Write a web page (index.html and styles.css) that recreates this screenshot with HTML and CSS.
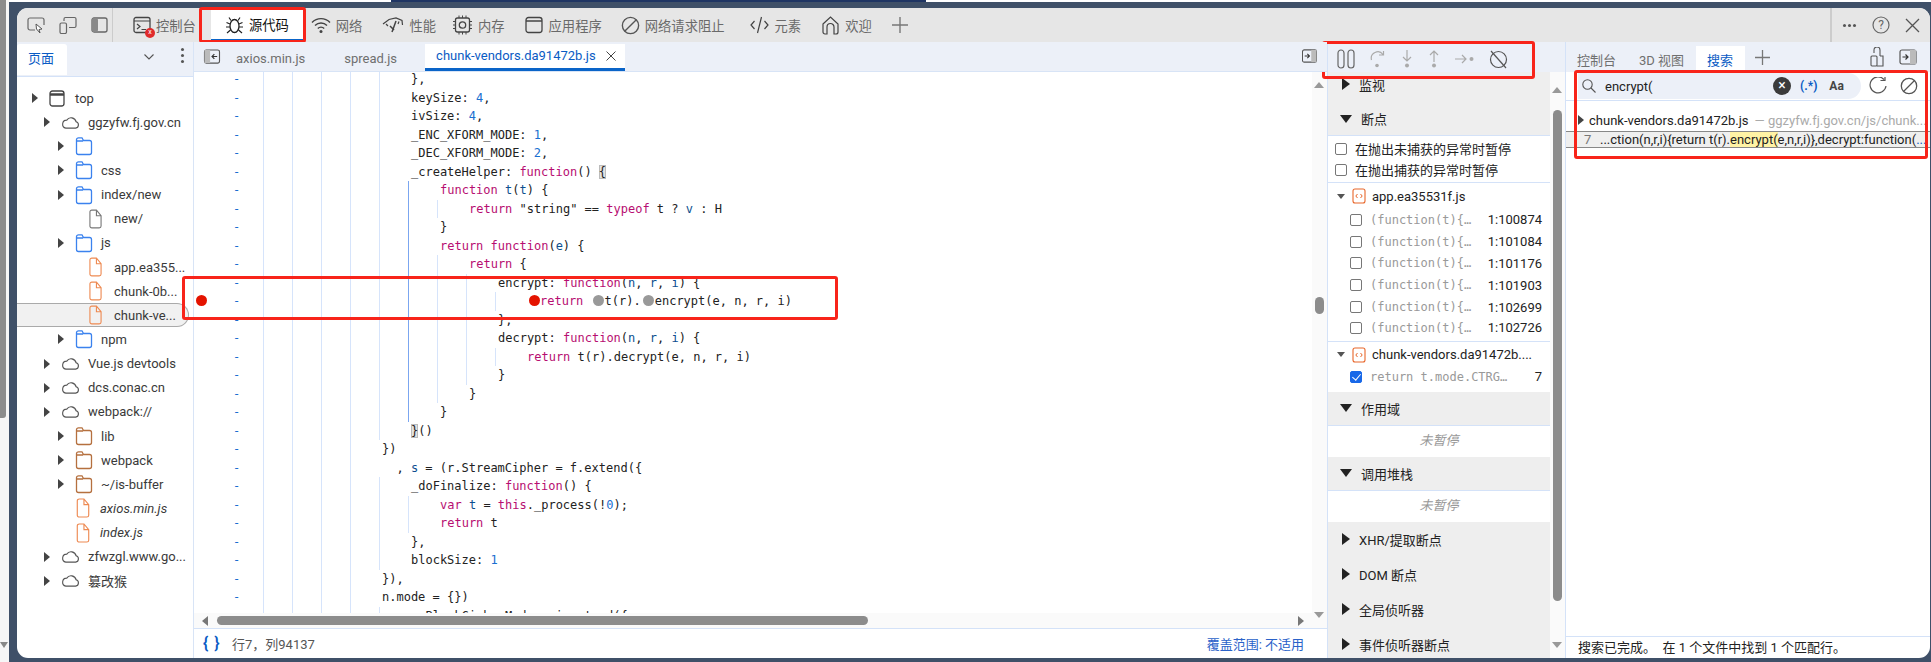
FILE: index.html
```html
<!DOCTYPE html>
<html lang="zh">
<head>
<meta charset="utf-8">
<title>DevTools</title>
<link rel="stylesheet" href="styles.css">
</head>
<body>
<svg class="defs" width="0" height="0">
  <symbol id="folder" viewBox="0 0 18 20"><path d="M1.5 5V16.5A2 2 0 0 0 3.5 18.5H14.500A2 2 0 0 0 16.500 16.500V6.500A2 2 0 0 0 14.500 4.500H8.500L7 1.800H3.500A2 2 0 0 0 1.500 3.800V5H8" fill="none" stroke="currentColor" stroke-width="1.300"/></symbol>
  <symbol id="file" viewBox="0 0 14 21"><path d="M1 3A2 2 0 0 1 3 1H8L13 7V18A2 2 0 0 1 11 20H3A2 2 0 0 1 1 18ZM8 1V7H13" fill="none" stroke="currentColor" stroke-width="1.200"/></symbol>
  <symbol id="cloud" viewBox="0 0 20 16"><path d="M5 14H15.500A3.500 3.500 0 0 0 16 7.200A5.500 5.500 0 0 0 6 5.500A4.300 4.300 0 0 0 5 14Z" fill="none" stroke="#555" stroke-width="1.200"/></symbol>
  <symbol id="ban" viewBox="0 0 18 18"><circle cx="9" cy="9" r="7.700" fill="none" stroke="currentColor" stroke-width="1.300"/><path d="M3.500 14.500L14.500 3.500" stroke="currentColor" stroke-width="1.300"/></symbol>
  <symbol id="jsfile" viewBox="0 0 14 16"><rect x="1" y="1" width="12" height="14" rx="2" fill="none" stroke="#e8662a" stroke-width="1.100"/><path d="M5.500 6L3.800 8L5.500 10M8.500 6L10.200 8L8.500 10" fill="none" stroke="#e8662a"/></symbol>
  <symbol id="dock" viewBox="0 0 18 16"><rect x="1" y="1" width="16" height="14" rx="2" fill="none" stroke="#555" stroke-width="1.200"/><rect x="11" y="1" width="6" height="14" fill="#bbb"/><path d="M3.500 8H9M6.500 5.500L9 8L6.500 10.500" fill="none" stroke="#333" stroke-width="1.200"/></symbol>
</svg>
<div class="app">
  <div class="rail"><span class="rail-thumb"></span><span class="rail-arrow"></span></div>
  <div class="frame">
    <div class="strip"><span class="seg-a"></span><span class="seg-b"></span><span class="seg-c"></span></div>
    <div class="window">
      <header class="topbar">
        <div class="tools">
          <svg width="18" height="18" viewBox="0 0 18 18"><path d="M8 14H3A2 2 0 0 1 1 12V4A2 2 0 0 1 3 2H15A2 2 0 0 1 17 4V9" fill="none" stroke="#666" stroke-width="1.200"/><path d="M9 8L15 13L12 13.500L13 17L9.500 13Z" fill="#fff" stroke="#555"/></svg>
          <svg width="18" height="18" viewBox="0 0 18 18"><rect x="1" y="7" width="6.500" height="10.500" rx="1.500" fill="none" stroke="#666" stroke-width="1.200"/><path d="M5 5V3A1.500 1.500 0 0 1 6.500 1.500H15.500A1.500 1.500 0 0 1 17 3V10A1.500 1.500 0 0 1 15.500 11.500H10" fill="none" stroke="#666" stroke-width="1.200"/></svg>
          <svg width="17" height="18" viewBox="0 0 17 18"><rect x="1" y="2" width="15" height="14" rx="2" fill="none" stroke="#666" stroke-width="1.300"/><rect x="1" y="2" width="6" height="14" rx="2" fill="#888"/></svg>
        </div>
        <nav class="tabs">
          <div class="tab">
            <span class="badged"><svg width="18" height="18" viewBox="0 0 18 18"><rect x="1" y="1.500" width="16" height="15" rx="2" fill="none" stroke="#444" stroke-width="1.300"/><path d="M1 5H17M4 8L7 10.500L4 13M8.500 13.500H13" fill="none" stroke="#444" stroke-width="1.200"/></svg><span class="badge">x</span></span>
            控制台
          </div>
          <div class="tab active">
            <svg width="19" height="18" viewBox="0 0 19 18"><ellipse cx="9.500" cy="10" rx="4.500" ry="6.500" fill="none" stroke="#222" stroke-width="1.300"/><path d="M6 4.500L4 1.500M13 4.500L15 1.500M5 8L1.500 6.500M14 8L17.500 6.500M5 11H1M14 11H18M5.500 14L2 17M13.500 14L17 17" fill="none" stroke="#222" stroke-width="1.200"/></svg>
            源代码
          </div>
          <div class="tab tab-net">
            <svg width="20" height="18" viewBox="0 0 20 18"><path d="M1 6.500A12.500 12.500 0 0 1 19 6.500M4 9.500A8.500 8.500 0 0 1 16 9.500M6.800 12.500A4.500 4.500 0 0 1 13.200 12.500" fill="none" stroke="#444" stroke-width="1.400"/><circle cx="10" cy="15.500" r="1.500" fill="#444"/></svg>
            网络
          </div>
          <div class="tab">
            <svg width="22" height="18" viewBox="0 0 22 18"><path d="M1 8L7 3.500L14 2L20 4.500L20.500 9M4 8L6 10M17 5.500L16 8" fill="none" stroke="#444" stroke-width="1.200"/><path d="M14 5L10 16M8 10L12 14" fill="none" stroke="#444" stroke-width="1.500"/></svg>
            性能
          </div>
          <div class="tab tab-mem">
            <svg width="21" height="20" viewBox="0 0 21 20"><rect x="3.500" y="3" width="14" height="14" rx="2" fill="none" stroke="#444" stroke-width="1.300"/><circle cx="10.500" cy="10" r="3.200" fill="none" stroke="#444" stroke-width="1.300"/><path d="M7 0.500V3M10.500 0.500V3M14 0.500V3M7 17V19.500M10.500 17V19.500M14 17V19.500M1 6.500H3.500M1 10H3.500M1 13.500H3.500M17.500 6.500H20M17.500 10H20M17.500 13.500H20" stroke="#444"/></svg>
            内存
          </div>
          <div class="tab tab-app">
            <svg width="18" height="18" viewBox="0 0 18 18"><rect x="1" y="1.500" width="16" height="15" rx="2.500" fill="none" stroke="#444" stroke-width="1.300"/><path d="M1 5H17" stroke="#444" stroke-width="1.300"/></svg>
            应用程序
          </div>
          <div class="tab">
            <svg class="ink" width="19" height="19"><use href="#ban"/></svg>
            网络请求阻止
          </div>
          <div class="tab tab-el">
            <svg width="19" height="18" viewBox="0 0 19 18"><path d="M4.500 5L1 9L4.500 13M14.500 5L18 9L14.500 13M11.500 1L7.500 17" fill="none" stroke="#444" stroke-width="1.200"/></svg>
            元素
          </div>
          <div class="tab tab-home">
            <svg width="17" height="19" viewBox="0 0 17 19"><path d="M1 8L8.500 1L16 8V16A2 2 0 0 1 14 18H12V11A3.500 3.500 0 0 0 5 11V18H3A2 2 0 0 1 1 16Z" fill="none" stroke="#444" stroke-width="1.200"/></svg>
            欢迎
          </div>
          <svg class="plus" width="16" height="16" viewBox="0 0 16 16"><path d="M8 0V16M0 8H16" stroke="#777" stroke-width="1.400"/></svg>
        </nav>
        <div class="winctl">
          <span class="dots"><i></i><i></i><i></i></span>
          <svg width="18" height="18" viewBox="0 0 18 18"><circle cx="9" cy="9" r="8" fill="none" stroke="#666" stroke-width="1.200"/><text x="9" y="13" class="q">?</text></svg>
          <svg width="15" height="15" viewBox="0 0 15 15"><path d="M1 1L14 14M14 1L1 14" stroke="#555" stroke-width="1.300"/></svg>
        </div>
      </header>

      <div class="panes">
        <aside class="nav">
          <div class="nav-head">
            <span class="nav-tab">页面</span>
            <svg class="chev" width="10" height="6" viewBox="0 0 10 6"><path d="M0.500 0.500L5 5L9.500 0.500" fill="none" stroke="#555" stroke-width="1.100"/></svg>
            <span class="kebab"><i></i><i></i><i></i></span>
          </div>
          <ul class="tree">
            <li class="node l0"><span class="tri"></span><svg class="i-top" width="16" height="17" viewBox="0 0 16 17"><rect x="1" y="1" width="14" height="15" rx="2.500" fill="none" stroke="#444" stroke-width="1.300"/><path d="M1 4.500H15" stroke="#444" stroke-width="2.500"/></svg>top</li>
            <li class="node l1"><span class="tri"></span><svg class="i-cloud" width="19" height="15"><use href="#cloud"/></svg>ggzyfw.fj.gov.cn</li>
            <li class="node l2"><span class="tri"></span><svg class="i-folder blue" width="18" height="20"><use href="#folder"/></svg></li>
            <li class="node l2"><span class="tri"></span><svg class="i-folder blue" width="18" height="20"><use href="#folder"/></svg>css</li>
            <li class="node l2"><span class="tri"></span><svg class="i-folder blue" width="18" height="20"><use href="#folder"/></svg>index/new</li>
            <li class="node l3"><svg class="i-file gray" width="13" height="20"><use href="#file"/></svg>new/</li>
            <li class="node l2"><span class="tri"></span><svg class="i-folder blue" width="18" height="20"><use href="#folder"/></svg>js</li>
            <li class="node l3"><svg class="i-file orange" width="13" height="20"><use href="#file"/></svg>app.ea355...</li>
            <li class="node l3"><svg class="i-file orange" width="13" height="20"><use href="#file"/></svg>chunk-0b...</li>
            <li class="node l3 sel"><svg class="i-file orange" width="13" height="20"><use href="#file"/></svg>chunk-ve...</li>
            <li class="node l2"><span class="tri"></span><svg class="i-folder blue" width="18" height="20"><use href="#folder"/></svg>npm</li>
            <li class="node l1"><span class="tri"></span><svg class="i-cloud" width="19" height="15"><use href="#cloud"/></svg>Vue.js devtools</li>
            <li class="node l1"><span class="tri"></span><svg class="i-cloud" width="19" height="15"><use href="#cloud"/></svg>dcs.conac.cn</li>
            <li class="node l1"><span class="tri"></span><svg class="i-cloud" width="19" height="15"><use href="#cloud"/></svg>webpack://</li>
            <li class="node l2"><span class="tri"></span><svg class="i-folder brown" width="18" height="20"><use href="#folder"/></svg>lib</li>
            <li class="node l2"><span class="tri"></span><svg class="i-folder brown" width="18" height="20"><use href="#folder"/></svg>webpack</li>
            <li class="node l2"><span class="tri"></span><svg class="i-folder brown" width="18" height="20"><use href="#folder"/></svg>~/is-buffer</li>
            <li class="node l4"><svg class="i-file orange" width="14" height="20"><use href="#file"/></svg>axios.min.js</li>
            <li class="node l4"><svg class="i-file orange" width="14" height="20"><use href="#file"/></svg>index.js</li>
            <li class="node l1"><span class="tri"></span><svg class="i-cloud" width="19" height="15"><use href="#cloud"/></svg>zfwzgl.www.go...</li>
            <li class="node l1"><span class="tri"></span><svg class="i-cloud" width="19" height="15"><use href="#cloud"/></svg>篡改猴</li>
          </ul>
        </aside>

        <main class="center">
          <div class="file-tabs">
            <svg class="side-toggle" width="18" height="15"><use href="#dock"/></svg>
            <span class="ftab">axios.min.js</span>
            <span class="ftab">spread.js</span>
            <span class="ftab current">chunk-vendors.da91472b.js<svg width="10" height="10" viewBox="0 0 10 10"><path d="M0.500 0.500L9.500 9.500M9.500 0.500L0.500 9.500" stroke="#444" stroke-width="1"/></svg></span>
            <svg class="side-toggle right" width="19" height="14"><use href="#dock"/></svg>
          </div>
          <div class="editor-body">
            <div class="editor-col">
              <div class="code">
                <div class="ln"><span class="num">-</span><span class="ig i5"></span><span class="tx">},</span></div>
                <div class="ln"><span class="num">-</span><span class="ig i5"></span><span class="tx">keySize: <b class="n">4</b>,</span></div>
                <div class="ln"><span class="num">-</span><span class="ig i5"></span><span class="tx">ivSize: <b class="n">4</b>,</span></div>
                <div class="ln"><span class="num">-</span><span class="ig i5"></span><span class="tx">_ENC_XFORM_MODE: <b class="n">1</b>,</span></div>
                <div class="ln"><span class="num">-</span><span class="ig i5"></span><span class="tx">_DEC_XFORM_MODE: <b class="n">2</b>,</span></div>
                <div class="ln"><span class="num">-</span><span class="ig i5"></span><span class="tx">_createHelper: <b class="k">function</b>() <b class="br">{</b></span></div>
                <div class="ln act"><span class="num">-</span><span class="ig i6"></span><span class="tx"><b class="k">function</b> <b class="v">t</b>(<b class="v">t</b>) {</span></div>
                <div class="ln act"><span class="num">-</span><span class="ig i7"></span><span class="tx"><b class="k">return</b> "string" == <b class="k">typeof</b> t ? <b class="v">v</b> : H</span></div>
                <div class="ln act"><span class="num">-</span><span class="ig i6"></span><span class="tx">}</span></div>
                <div class="ln act"><span class="num">-</span><span class="ig i6"></span><span class="tx"><b class="k">return</b> <b class="k">function</b>(<b class="v">e</b>) {</span></div>
                <div class="ln act"><span class="num">-</span><span class="ig i7"></span><span class="tx"><b class="k">return</b> {</span></div>
                <div class="ln act"><span class="num">-</span><span class="ig i8"></span><span class="tx">encrypt: <b class="k">function</b>(<b class="v">n</b>, <b class="v">r</b>, <b class="v">i</b>) {</span></div>
                <div class="ln act"><span class="num">-</span><span class="bp"></span><span class="ig i9"></span><span class="tx"><i class="dot red"></i><b class="k">return</b> <i class="dot"></i>t(r).<i class="dot"></i>encrypt(e, n, r, i)</span></div>
                <div class="ln act"><span class="num">-</span><span class="ig i8"></span><span class="tx">},</span></div>
                <div class="ln act"><span class="num">-</span><span class="ig i8"></span><span class="tx">decrypt: <b class="k">function</b>(<b class="v">n</b>, <b class="v">r</b>, <b class="v">i</b>) {</span></div>
                <div class="ln act"><span class="num">-</span><span class="ig i9"></span><span class="tx"><b class="k">return</b> t(r).decrypt(e, n, r, i)</span></div>
                <div class="ln act"><span class="num">-</span><span class="ig i8"></span><span class="tx">}</span></div>
                <div class="ln act"><span class="num">-</span><span class="ig i7"></span><span class="tx">}</span></div>
                <div class="ln act"><span class="num">-</span><span class="ig i6"></span><span class="tx">}</span></div>
                <div class="ln"><span class="num">-</span><span class="ig i5"></span><span class="tx"><b class="br">}</b>()</span></div>
                <div class="ln"><span class="num">-</span><span class="ig i4"></span><span class="tx">})</span></div>
                <div class="ln"><span class="num">-</span><span class="ig i4"></span><span class="tx">  , <b class="v">s</b> = (r.StreamCipher = f.extend({</span></div>
                <div class="ln"><span class="num">-</span><span class="ig i5"></span><span class="tx">_doFinalize: <b class="k">function</b>() {</span></div>
                <div class="ln"><span class="num">-</span><span class="ig i6"></span><span class="tx"><b class="k">var</b> <b class="v">t</b> = <b class="k">this</b>._process(!<b class="n">0</b>);</span></div>
                <div class="ln"><span class="num">-</span><span class="ig i6"></span><span class="tx"><b class="k">return</b> t</span></div>
                <div class="ln"><span class="num">-</span><span class="ig i5"></span><span class="tx">},</span></div>
                <div class="ln"><span class="num">-</span><span class="ig i5"></span><span class="tx">blockSize: <b class="n">1</b></span></div>
                <div class="ln"><span class="num">-</span><span class="ig i4"></span><span class="tx">}),</span></div>
                <div class="ln"><span class="num">-</span><span class="ig i4"></span><span class="tx">n.mode = {})</span></div>
                <div class="ln"><span class="num">-</span><span class="ig i5"></span><span class="tx">n.BlockCipherMode = i.extend({</span></div>
              </div>
              <div class="hscroll">
                <span class="arrow-l"></span>
                <span class="hthumb"></span>
                <span class="arrow-r"></span>
              </div>
            </div>
            <div class="vscroll">
              <span class="arrow-u"></span>
              <span class="vthumb"></span>
              <span class="arrow-d"></span>
            </div>
          </div>
          <footer class="status">
            <span class="braces">{ }</span>
            <span class="pos">行7，列94137</span>
            <span class="cover">覆盖范围: 不适用</span>
          </footer>
        </main>

        <section class="debug">
          <div class="dbg-tools">
            <svg width="18" height="20" viewBox="0 0 18 20"><rect x="1" y="1" width="6" height="18" rx="3" fill="none" stroke="#666" stroke-width="1.200"/><rect x="11" y="1" width="6" height="18" rx="3" fill="none" stroke="#666" stroke-width="1.200"/></svg>
            <svg width="16" height="18" viewBox="0 0 16 18"><path d="M1.500 10A6.500 6.500 0 0 1 13 4.500M9 5H13.500V1" fill="none" stroke="#aaa" stroke-width="1.200"/><circle cx="7" cy="15.500" r="1.800" fill="#aaa"/></svg>
            <svg width="12" height="18" viewBox="0 0 12 18"><path d="M6 0V10M2 7L6 11L10 7" fill="none" stroke="#aaa" stroke-width="1.200"/><circle cx="6" cy="15.500" r="2" fill="#aaa"/></svg>
            <svg width="12" height="18" viewBox="0 0 12 18"><path d="M6 12V1M2 5L6 1L10 5" fill="none" stroke="#aaa" stroke-width="1.200"/><circle cx="6" cy="15.500" r="2" fill="#aaa"/></svg>
            <svg width="19" height="12" viewBox="0 0 19 12"><path d="M0 6H11M7 2L11 6L7 10" fill="none" stroke="#aaa" stroke-width="1.200"/><circle cx="16.500" cy="6" r="2" fill="#aaa"/></svg>
            <svg class="ink" width="19" height="19" viewBox="0 0 19 19"><circle cx="9.500" cy="9.500" r="8" fill="none" stroke="#555" stroke-width="1.200"/><path d="M2 1L17 18" stroke="#555" stroke-width="1.200"/></svg>
          </div>
          <div class="dbg-scroll">
            <div class="dbg-list">
              <div class="sec first"><span class="tri big"></span>监视</div>
              <div class="sec line"><span class="tri down"></span>断点</div>
              <div class="checks">
                <label class="chk"><i class="box"></i>在抛出未捕获的异常时暂停</label>
                <label class="chk"><i class="box"></i>在抛出捕获的异常时暂停</label>
              </div>
              <div class="bp-file"><span class="tri small"></span><svg width="14" height="16"><use href="#jsfile"/></svg>app.ea35531f.js</div>
              <div class="bp-row"><i class="box"></i><span class="snip">(function(t){…</span><span class="loc">1:100874</span></div>
              <div class="bp-row"><i class="box"></i><span class="snip">(function(t){…</span><span class="loc">1:101084</span></div>
              <div class="bp-row"><i class="box"></i><span class="snip">(function(t){…</span><span class="loc">1:101176</span></div>
              <div class="bp-row"><i class="box"></i><span class="snip">(function(t){…</span><span class="loc">1:101903</span></div>
              <div class="bp-row"><i class="box"></i><span class="snip">(function(t){…</span><span class="loc">1:102699</span></div>
              <div class="bp-row last"><i class="box"></i><span class="snip">(function(t){…</span><span class="loc">1:102726</span></div>
              <div class="bp-file"><span class="tri small"></span><svg width="14" height="16"><use href="#jsfile"/></svg>chunk-vendors.da91472b....</div>
              <div class="bp-row single"><i class="box on"></i><span class="snip">return t.mode.CTRG…</span><span class="loc">7</span></div>
              <div class="sec line"><span class="tri down"></span>作用域</div>
              <div class="idle">未暂停</div>
              <div class="sec line"><span class="tri down"></span>调用堆栈</div>
              <div class="idle">未暂停</div>
              <div class="sec tall"><span class="tri big"></span>XHR/提取断点</div>
              <div class="sec tall"><span class="tri big"></span>DOM 断点</div>
              <div class="sec tall"><span class="tri big"></span>全局侦听器</div>
              <div class="sec tall"><span class="tri big"></span>事件侦听器断点</div>
            </div>
            <div class="dbg-bar">
              <span class="arrow-u"></span>
              <span class="dthumb"></span>
              <span class="arrow-d"></span>
            </div>
          </div>
        </section>

        <aside class="drawer">
          <div class="drawer-tabs">
            <span class="dtab">控制台</span>
            <span class="dtab">3D 视图</span>
            <span class="dtab on">搜索</span>
            <svg class="plus" width="15" height="15" viewBox="0 0 15 15"><path d="M7.500 0V15M0 7.500H15" stroke="#777" stroke-width="1.300"/></svg>
            <span class="spring"></span>
            <svg width="14" height="20" viewBox="0 0 14 20"><path d="M4 6V3A3 3 0 0 1 10 3V9" fill="none" stroke="#555" stroke-width="1.100"/><rect x="1" y="9" width="6" height="10" rx="1" fill="none" stroke="#555" stroke-width="1.100"/><path d="M10 9H13V19H7" fill="none" stroke="#555" stroke-width="1.100"/></svg>
            <svg width="18" height="16"><use href="#dock"/></svg>
          </div>
          <div class="search-row">
            <div class="pill">
              <svg width="14" height="14" viewBox="0 0 14 14"><circle cx="5.500" cy="5.500" r="4.700" fill="none" stroke="#555" stroke-width="1.100"/><path d="M9 9L13.500 13.500" stroke="#555" stroke-width="1.100"/></svg>
              <span class="query">encrypt(</span>
              <span class="clear">×</span>
              <span class="regex">(.*)</span>
              <span class="case">Aa</span>
            </div>
            <svg class="refresh" width="18" height="18" viewBox="0 0 18 18"><path d="M15 2.500A8 8 0 1 0 17 9M11.500 3.500H16V0" fill="none" stroke="#555" stroke-width="1.200"/></svg>
            <svg class="ink" width="18" height="18"><use href="#ban"/></svg>
          </div>
          <div class="results">
            <div class="res-file"><span class="tri"></span><span class="res-name">chunk-vendors.da91472b.js</span><span class="res-path">— ggzyfw.fj.gov.cn/js/chunk...</span></div>
            <div class="res-line"><span class="res-no">7</span><span class="res-txt">...ction(n,r,i){return t(r).<mark class="hit">encrypt(</mark>e,n,r,i)},decrypt:function(<em class="more">...</em></span></div>
          </div>
          <div class="drawer-status">搜索已完成。&nbsp; 在 1 个文件中找到 1 个匹配行。</div>
        </aside>
      </div>
    </div>
  </div>
  <span class="mark m-tab"></span>
  <span class="mark m-line"></span>
  <span class="mark m-tools"></span>
  <span class="mark m-search"></span>
</div>
</body>
</html>
```
FILE: styles.css
```css
* { box-sizing: border-box; }
html, body { margin: 0; padding: 0; }
body { width: 1931px; height: 662px; overflow: hidden; font-family: Roboto, "Noto Sans CJK SC", sans-serif; font-size: 13px; color: #333; }
.defs { position: absolute; }
svg { flex: none; display: block; }
.ink { color: #555; }

.app { position: relative; display: flex; width: 1931px; height: 662px; background: #3f5068; }
.rail { position: relative; width: 9px; background: #f6f6f6; }
.rail-thumb { display: block; width: 6px; height: 418px; background: #8c8c8c; border-radius: 0 0 3px 0; }
.rail-arrow { position: absolute; left: 0; top: 642px; border-left: 4px solid transparent; border-right: 4px solid transparent; border-top: 6px solid #888; }
.frame { flex: 1; display: flex; flex-direction: column; min-width: 0; padding-right: 1px; }
.strip { display: flex; height: 2px; margin-bottom: 6px; margin-right: -1px; }
.seg-a { width: 382px; background: #fff; }
.seg-b { width: 535px; background: #1f3563; }
.seg-c { flex: 1; background: #fff; }
.window { flex: 1; display: flex; flex-direction: column; margin: 0 0 4px 8px; background: #fff; border-radius: 11px; overflow: hidden; min-height: 0; }

/* top bar */
.topbar { display: flex; align-items: center; height: 34px; background: #e6e6e6; flex: none; }
.tools { display: flex; align-items: center; gap: 14px; width: 96px; height: 100%; padding-left: 10px; border-right: 1px solid #ccc; }
.tabs { display: flex; align-items: center; height: 100%; flex: 1; padding-left: 10px; }
.tab { display: flex; align-items: center; gap: 5px; height: 100%; padding: 0 10px; color: #6a6a6a; white-space: nowrap; font-size: 13.3px; }
.tab:first-child { margin-right: 5px; }
.tab.active { height: 32px; align-self: flex-end; padding: 0 14px; background: #fff; color: #111; border-bottom: 3px solid #0a64c8; }
.tab-net { margin-left: -2px; }
.tab-mem { margin-left: -4px; }
.tab-app { margin-right: -1px; gap: 6px; }
.tab-el { margin-left: 5px; gap: 6px; }
.tab-home { margin-left: 1px; gap: 6px; }
.badged { position: relative; display: block; }
.badge { position: absolute; right: -4px; bottom: -4px; width: 10px; height: 10px; border-radius: 50%; background: #e02b2b; color: #fff; font-size: 7px; line-height: 9px; text-align: center; }
.plus { margin-left: 10px; }
.winctl { display: flex; align-items: center; gap: 15px; height: 100%; width: 100px; padding-left: 11px; border-left: 2px solid #ccc; }
.dots { display: flex; gap: 2px; width: 14px; }
.dots i { width: 3px; height: 3px; border-radius: 50%; background: #555; }
.q { font-size: 12px; fill: #666; text-anchor: middle; }

/* panes */
.panes { flex: 1; display: flex; min-height: 0; }
.nav { width: 177px; flex: none; border-right: 1px solid #d8e4f6; display: flex; flex-direction: column; }
.nav-head { position: relative; display: flex; align-items: flex-start; height: 35px; background: #ecf0f8; border-bottom: 1px solid #d4e2f8; }
.nav-tab { width: 50px; height: 31px; margin-top: 2px; background: #fff; color: #0a5bc4; line-height: 30px; padding-left: 11px; border-radius: 3px 3px 0 0; }
.chev { margin: 12px 0 0 77px; }
.kebab { display: flex; flex-direction: column; gap: 3px; margin: 6px 0 0 27px; }
.kebab i { width: 3px; height: 3px; border-radius: 50%; background: #555; }
.tree { list-style: none; margin: 9px 0 0; padding: 0; }
.node { display: flex; align-items: center; height: 24.15px; white-space: nowrap; color: #3a3a3a; position: relative; }
.tri { width: 0; height: 0; border-left: 6px solid #444; border-top: 5px solid transparent; border-bottom: 5px solid transparent; flex: none; }
.l0 { padding-left: 15px; }
.l1 { padding-left: 27px; }
.l2 { padding-left: 41px; }
.l3 { padding-left: 72px; }
.l4 { padding-left: 59px; font-style: italic; }
.l0 .tri, .l1 .tri, .l2 .tri { margin-right: 11px; }
.i-top { margin-right: 10px; }
.i-cloud { margin-right: 8px; }
.i-folder { margin-right: 8px; }
.i-file { margin-right: 12px; }
.l4 .i-file { margin-right: 10px; }
.blue { color: #3b82ee; }
.brown { color: #b5703f; }
.orange { color: #ee8a52; }
.gray { color: #777; }
.sel { width: 172px; background: #f1f1f1; border: 1px solid #aaa; border-left: 0; border-radius: 0 12px 12px 0; }

/* editor */
.center { width: 1133px; flex: none; display: flex; flex-direction: column; }
.file-tabs { position: relative; z-index: 1; display: flex; align-items: flex-end; height: 30px; background: #ecf0f8; border-bottom: 1px solid #d8e4f6; flex: none; }
.side-toggle { margin: 0 0 7px 9px; transform: scaleX(-1); }
.side-toggle.right { margin: 0 8px 8px auto; transform: none; }
.ftab { height: 27px; line-height: 30px; color: #6f6f6f; white-space: nowrap; }
.ftab:nth-of-type(1) { margin-left: 15px; }
.ftab:nth-of-type(2) { margin-left: 39px; }
.current { display: flex; align-items: center; gap: 10px; width: 200px; margin-left: 28px; padding-left: 11px; background: #fff; color: #0a5bc4; border-bottom: 3px solid #0a64c8; }
.editor-body { flex: 1; display: flex; min-height: 0; }
.editor-col { flex: 1; min-width: 0; display: flex; flex-direction: column; }
.code { flex: 1; min-height: 0; overflow: hidden; font-family: "DejaVu Sans Mono", monospace; font-size: 12px; color: #222; margin-top: -2px; }
.ln { position: relative; display: flex; height: 18.5px; line-height: 18.5px; white-space: pre; }
.num { width: 69px; padding-left: 39px; color: #1a6fd0; flex: none; }
.ig { height: 100%; flex: none; background-image: repeating-linear-gradient(to right, #d6e4fb 0 1px, transparent 1px 29px); }
.i4 { width: 116px; }
.i5 { width: 145px; }
.i6 { width: 174px; }
.i7 { width: 203px; }
.i8 { width: 232px; }
.i9 { width: 261px; }
.act .ig { background-image: linear-gradient(#7ba6f0, #7ba6f0), repeating-linear-gradient(to right, #d6e4fb 0 1px, transparent 1px 29px); background-size: 1px 100%, auto; background-position: 145px 0, 0 0; background-repeat: no-repeat, repeat; }
.tx { margin-left: 3px; }
.tx b { font-weight: 400; }
.k { color: #b70d71; }
.n { color: #1a6fd0; }
.v { color: #0d4f8f; }
.br { background: #e2e2e2; box-shadow: inset 0 0 0 1px #bbb; }
.bp { position: absolute; left: 2px; top: 3px; width: 11px; height: 11px; border-radius: 50%; background: #e41300; }
.dot { display: inline-block; width: 11px; height: 11px; margin: 0 1px 0 2px; border-radius: 50%; background: #999; vertical-align: -1px; }
.dot.red { background: #e41300; margin-right: 0; }
.hscroll { position: relative; z-index: 1; display: flex; align-items: center; height: 15px; background: #fafafa; flex: none; padding: 0 8px 0 8px; }
.arrow-l { border-right: 6px solid #777; border-top: 5px solid transparent; border-bottom: 5px solid transparent; }
.arrow-r { margin-left: auto; border-left: 6px solid #777; border-top: 5px solid transparent; border-bottom: 5px solid transparent; }
.hthumb { width: 651px; height: 9px; margin-left: 9px; background: #8c8c8c; border-radius: 5px; }
.vscroll { position: relative; width: 15px; background: #fafafa; flex: none; }
.vthumb { position: absolute; left: 3px; top: 225px; width: 9px; height: 17px; border-radius: 5px; background: #8c8c8c; }
.arrow-u { position: absolute; left: 2px; top: 10px; border-left: 5px solid transparent; border-right: 5px solid transparent; border-bottom: 6px solid #999; }
.arrow-d { position: absolute; left: 2px; bottom: 10px; border-left: 5px solid transparent; border-right: 5px solid transparent; border-top: 6px solid #999; }
.status { display: flex; align-items: center; height: 30px; border-top: 1px solid #d4e2f8; padding: 0 23px 0 9px; flex: none; color: #555; }
.braces { color: #0a5bc4; font-size: 16px; font-weight: 600; width: 29px; letter-spacing: 1px; }
.cover { margin-left: auto; color: #2a62c9; }

/* debugger */
.debug { width: 238px; flex: none; display: flex; flex-direction: column; border-left: 1px solid #d4e2f8; }
.dbg-tools { display: flex; align-items: center; height: 30px; background: #ecf0f8; padding: 4px 0 0 9px; flex: none; gap: 15px; }
.dbg-scroll { flex: 1; display: flex; min-height: 0; }
.dbg-list { width: 222px; flex: none; overflow: hidden; }
.sec { display: flex; align-items: center; gap: 9px; height: 34px; padding-left: 12px; background: #eee; color: #222; white-space: nowrap; }
.sec.first { height: 30px; padding-bottom: 6px; }
.sec.line { border-bottom: 1px solid #d4e2f8; }
.sec.tall { height: 35px; }
.tri.big { border-left: 8px solid #222; border-top: 6px solid transparent; border-bottom: 6px solid transparent; margin-left: 2px; }
.tri.down { border-left: 6px solid transparent; border-right: 6px solid transparent; border-top: 8px solid #222; border-bottom: 0; }
.tri.small { border-left: 4px solid transparent; border-right: 4px solid transparent; border-top: 5px solid #555; border-bottom: 0; }
.checks { display: flex; flex-direction: column; justify-content: center; gap: 3px; height: 47px; border-bottom: 1px solid #d4e2f8; }
.chk { display: flex; align-items: center; gap: 8px; height: 18px; padding-left: 7px; white-space: nowrap; color: #222; }
.box { display: block; width: 12px; height: 12px; border: 1.300px solid #777; border-radius: 2px; background: #fff; flex: none; }
.box.on { background: #1868e8; border-color: #1868e8; position: relative; }
.box.on::after { content: ""; position: absolute; left: 3px; top: 0; width: 4px; height: 7px; border: solid #fff; border-width: 0 1.500px 1.500px 0; transform: rotate(40deg); }
.bp-file { display: flex; align-items: center; gap: 6px; height: 26px; padding-left: 9px; white-space: nowrap; color: #222; }
.bp-file svg { margin-left: 1px; }
.bp-row { display: flex; align-items: center; height: 21.8px; padding-left: 22px; white-space: nowrap; }
.bp-row.last { height: 24px; padding-bottom: 3px; border-bottom: 1px solid #d4e2f8; }
.bp-row.single { height: 24px; padding-bottom: 6px; }
.snip { font-family: "DejaVu Sans Mono", monospace; font-size: 12px; color: #999; margin-left: 8px; }
.loc { margin-left: auto; margin-right: 8px; color: #222; }
.idle { height: 31px; line-height: 30px; text-align: center; font-style: italic; color: #999; }
.dbg-bar { position: relative; flex: 1; background: #fafafa; }
.dthumb { position: absolute; left: 3px; top: 38px; width: 9px; height: 491px; border-radius: 5px; background: #8c8c8c; }
.dbg-bar .arrow-u { top: 15px; }
.dbg-bar .arrow-d { bottom: 10px; }

/* drawer */
.drawer { flex: 1; min-width: 0; display: flex; flex-direction: column; border-left: 1px solid #d4e2f8; }
.drawer-tabs { display: flex; align-items: center; height: 30px; background: #ecf0f8; padding: 0 13px 0 11px; flex: none; }
.dtab { color: #6f6f6f; height: 26px; line-height: 29px; align-self: flex-end; white-space: nowrap; }
.dtab:nth-of-type(2) { margin-left: 23px; }
.dtab.on { width: 49px; margin-left: 12px; padding-left: 11px; background: #fff; color: #0a5bc4; }
.spring { flex: 1; }
.drawer-tabs svg + svg { margin-left: 15px; }
.drawer-tabs .plus { margin-left: 10px; }
.search-row { display: flex; align-items: center; height: 29px; padding-left: 12px; border-bottom: 1px solid #d4e2f8; flex: none; }
.pill { display: flex; align-items: center; width: 283px; height: 26px; padding-left: 4px; background: #ecf0f8; border-radius: 0 13px 13px 0; color: #222; }
.query { margin-left: 9px; width: 168px; }
.clear { width: 18px; height: 18px; border-radius: 50%; background: #3b3b3b; color: #fff; line-height: 17px; text-align: center; font-size: 14px; }
.regex { margin-left: 9px; color: #0a5bc4; font-weight: 700; font-size: 12px; white-space: nowrap; }
.case { margin-left: 12px; color: #444; font-weight: 700; font-size: 12px; }
.refresh { margin-left: 8px; }
.search-row .ink { margin-left: 13px; }
.results { flex: 1; padding-top: 8px; min-height: 0; white-space: nowrap; overflow: hidden; }
.res-file { display: flex; align-items: center; height: 22px; padding-left: 12px; color: #222; }
.res-name { margin-left: 5px; }
.res-path { margin-left: 6px; color: #aaa; }
.res-line { display: flex; height: 17px; line-height: 15px; background: #efefef; border-top: 1px solid #888; border-bottom: 1px solid #888; color: #222; }
.res-no { width: 34px; padding-left: 18px; color: #777; flex: none; }
.hit { background: #fff3a5; color: inherit; }
.more { color: #0a5bc4; font-style: normal; }
.drawer-status { height: 22px; line-height: 21px; border-top: 1px solid #d4e2f8; padding-left: 12px; color: #222; flex: none; white-space: pre; }

/* red annotations */
.mark { position: absolute; border: 3px solid #f8241a; border-radius: 3px; pointer-events: none; }
.m-tab { left: 199px; top: 7px; width: 107px; height: 36px; }
.m-line { left: 182px; top: 276px; width: 656px; height: 44px; }
.m-tools { left: 1322px; top: 41px; width: 213px; height: 38px; }
.m-search { left: 1574px; top: 70px; width: 354px; height: 89px; }
```
